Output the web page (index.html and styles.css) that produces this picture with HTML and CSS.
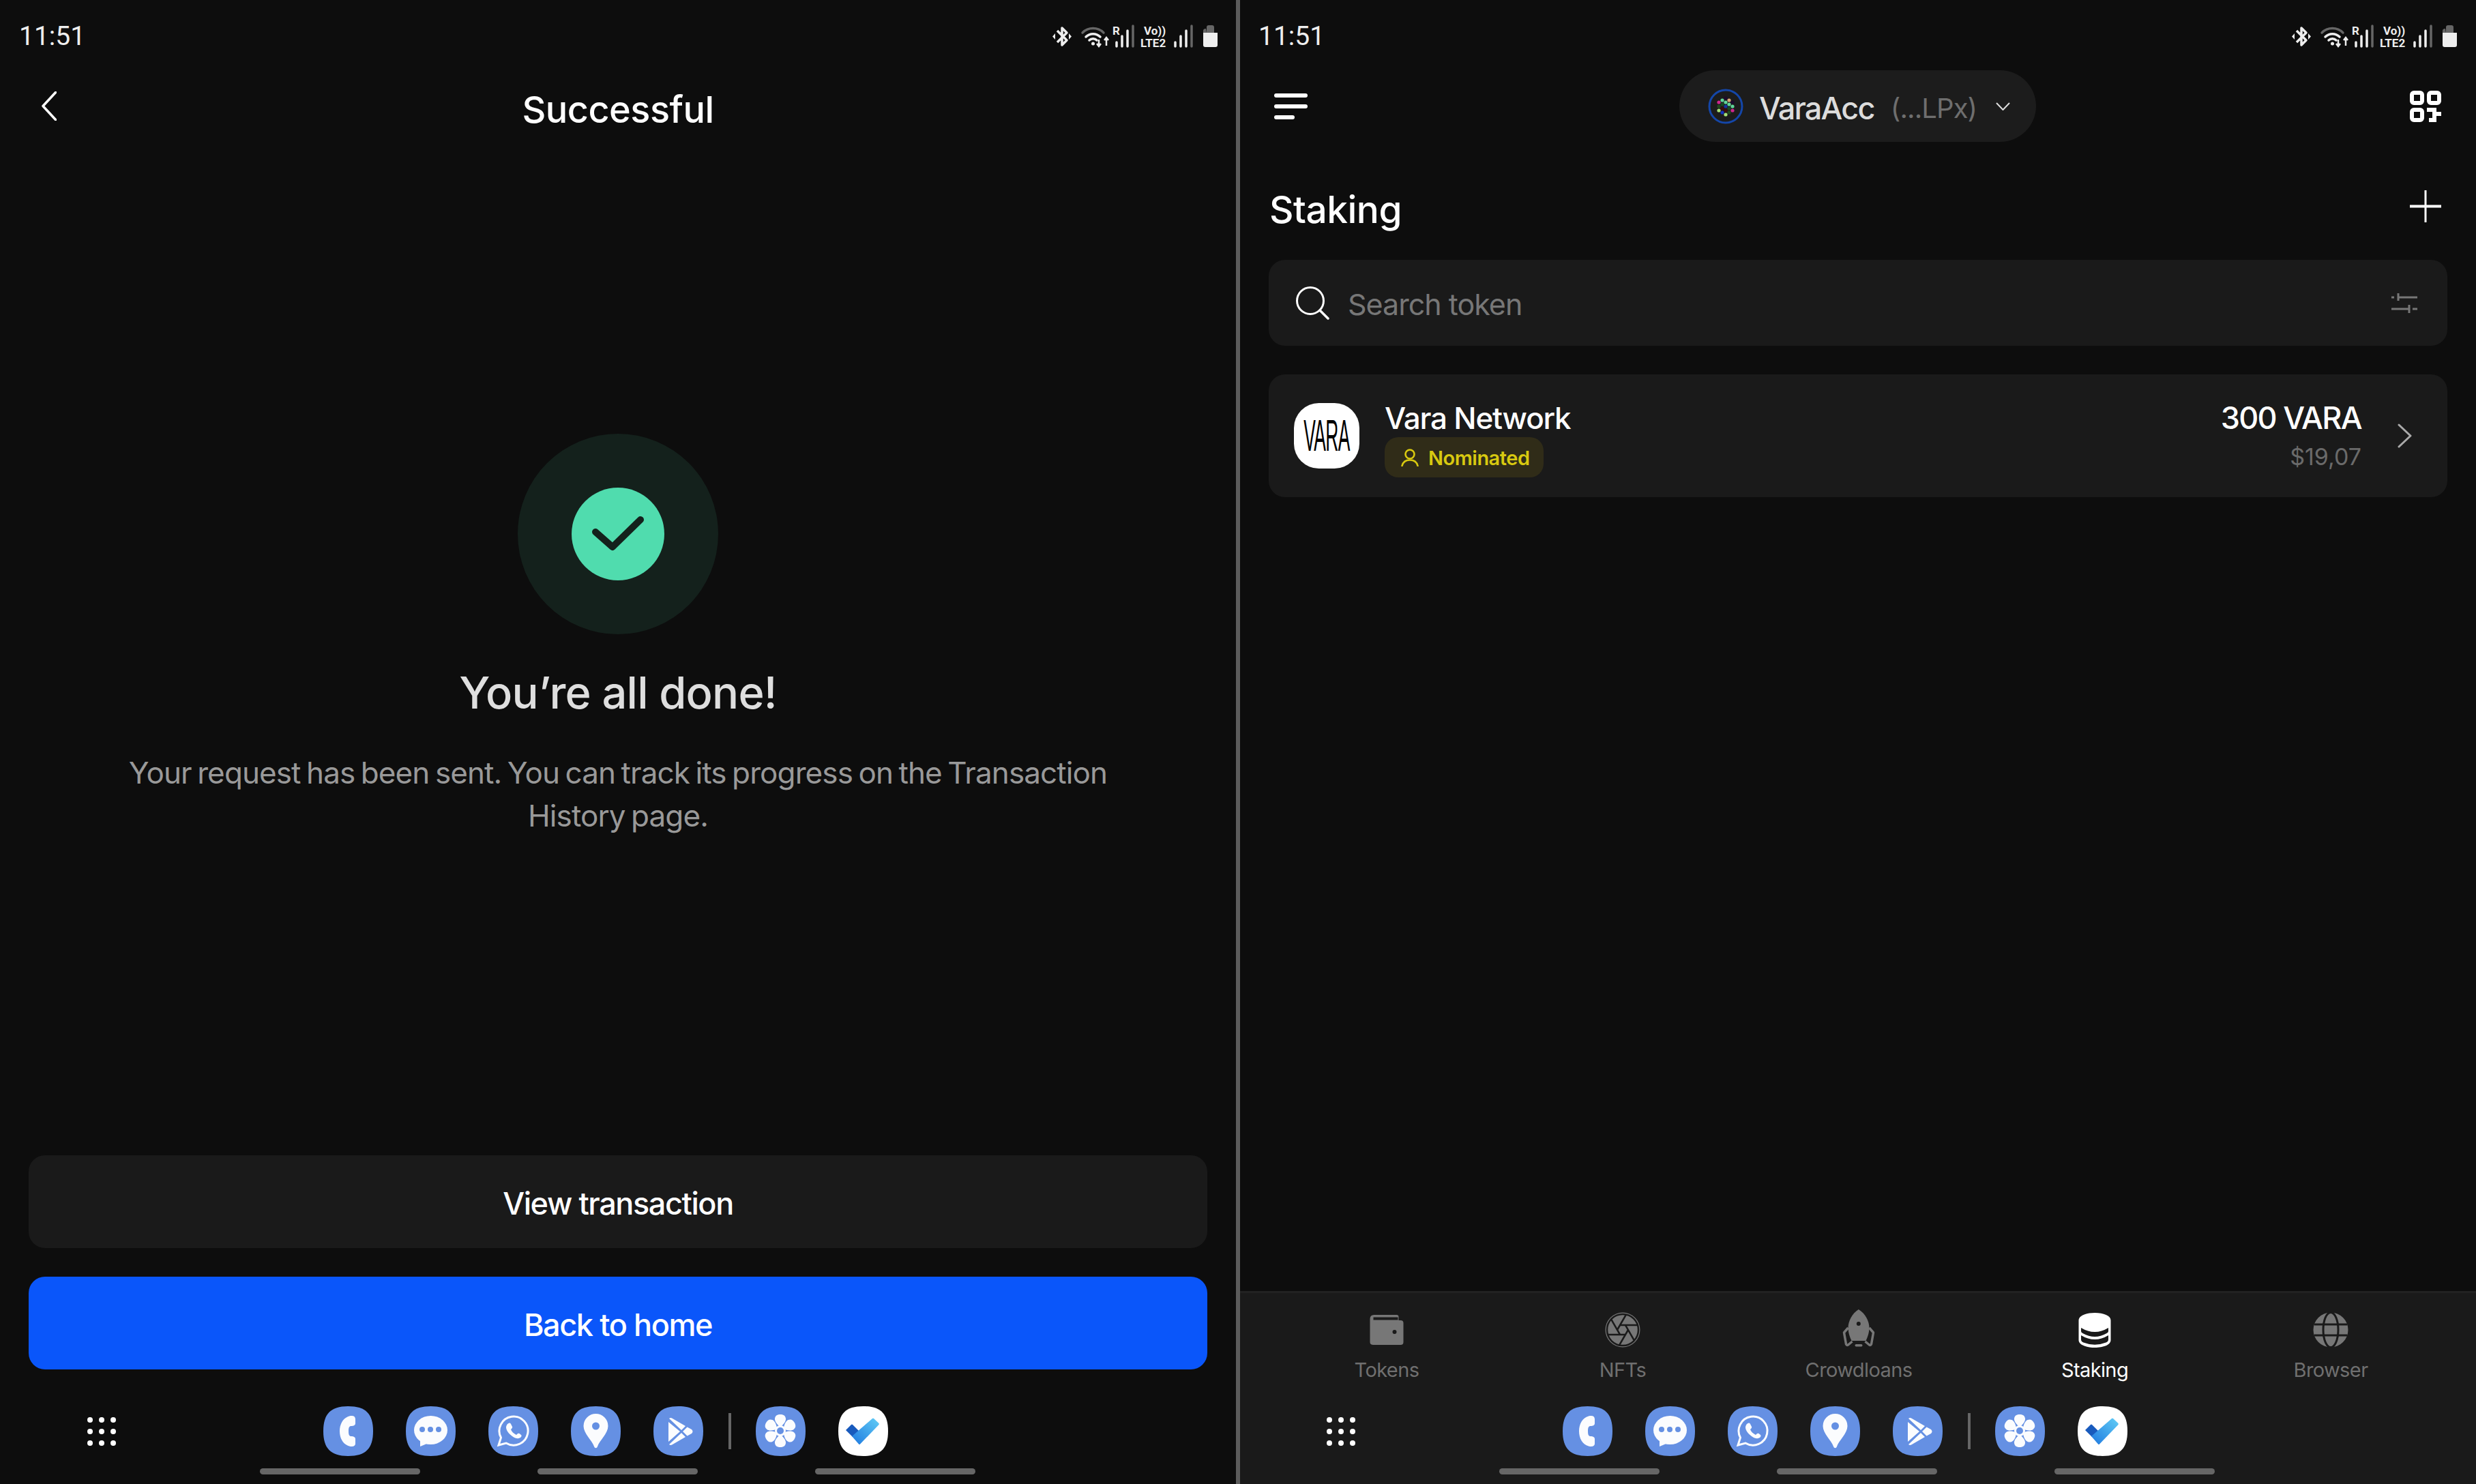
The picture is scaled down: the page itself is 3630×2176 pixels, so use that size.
FILE: index.html
```html
<!DOCTYPE html>
<html lang="en">

<head>
    <meta charset="utf-8">
    <title>Staking</title>
    <link rel="stylesheet" href="styles.css">
</head>

<body>
    <svg class="defs" aria-hidden="true">
        <defs>
            <linearGradient id="todo-grad" x1="1" y1="0" x2="0" y2="1">
                <stop offset="0" stop-color="#62cdf6"/>
                <stop offset="1" stop-color="#1e78df"/>
            </linearGradient>
            <path id="petal" d="M36 30.500C30 26 27.500 21 28 18 28.500 13.500 32 12 36 12S43.500 13.500 44 18C44.500 21 42 26 36 30.500Z"/>
        </defs>
        <symbol id="app-phone" viewBox="0 0 73 73">
            <path fill="#6590e3" d="M36.5 0C62 0 73 11 73 36.5S62 73 36.5 73 0 62 0 36.5 11 0 36.5 0Z"/>
            <path fill="#fbfcfe" d="M38 14.5C44 13 47 15 47 19V25C47 28 44 29 41 29 38 29 37 31 37 36.5 37 42 38 44 41 44 44 44 47 45 47 48V55C47 58 44 60 38 58.5 29 56 24 47 24 36.5 24 26 29 17 38 14.5Z"/>
        </symbol>
        <symbol id="app-message" viewBox="0 0 73 73">
            <path fill="#6590e3" d="M36.5 0C62 0 73 11 73 36.5S62 73 36.5 73 0 62 0 36.5 11 0 36.5 0Z"/>
            <ellipse cx="36.5" cy="35" rx="24.5" ry="21" fill="#fbfcfe"/>
            <path fill="#fbfcfe" d="M21 48L21 59 33 54Z"/>
            <circle cx="24" cy="34" r="4" fill="#6590e3"/>
            <circle cx="36" cy="34" r="4" fill="#6590e3"/>
            <circle cx="48" cy="34" r="4" fill="#6590e3"/>
        </symbol>
        <symbol id="app-whatsapp" viewBox="0 0 73 73">
            <path fill="#6590e3" d="M36.5 0C62 0 73 11 73 36.5S62 73 36.5 73 0 62 0 36.5 11 0 36.5 0Z"/>
            <path fill="none" stroke="#fbfcfe" stroke-width="3" d="M15 57L18.500 46A21 21 0 1 1 26 54Z"/>
            <path fill="#fbfcfe" d="M28 26C30 24 32 24 33 26L35 30C35.500 31 35 32 34 33L33 34C34 37 37 40 41 42L42.500 40.500C43.500 39.500 44.500 39.500 45.500 40L48 42C49 43 48.500 45 47 46 44 48 40 47.500 35 44 30 40.500 26 35 26 31 26 29 27 27 28 26Z"/>
        </symbol>
        <symbol id="app-pin" viewBox="0 0 73 73">
            <path fill="#6590e3" d="M36.5 0C62 0 73 11 73 36.5S62 73 36.5 73 0 62 0 36.5 11 0 36.5 0Z"/>
            <path fill="#fbfcfe" d="M36.5 11A18 18 0 0 1 54.500 29C54.500 40 42 50 39 59 38 62 35 62 34 59 31 50 18.500 40 18.500 29A18 18 0 0 1 36.500 11Z"/>
            <circle cx="36.500" cy="29" r="5.500" fill="#6590e3"/>
        </symbol>
        <symbol id="app-store" viewBox="0 0 73 73">
            <path fill="#6590e3" d="M36.5 0C62 0 73 11 73 36.5S62 73 36.5 73 0 62 0 36.5 11 0 36.5 0Z"/>
            <path fill="#fbfcfe" d="M22 23L39 37 22 52Z"/>
            <path fill="#fbfcfe" d="M23 18Q25 16 28 18L47 29 41 35Z"/>
            <path fill="#fbfcfe" d="M23 56Q25 58 28 56L47 45 41 39Z"/>
            <path fill="#fbfcfe" d="M43 37L49.500 30.500 56 34Q59 37 56 40L49.500 43.500Z"/>
        </symbol>
        <symbol id="app-flower" viewBox="0 0 73 73">
            <path fill="#6590e3" d="M36.5 0C62 0 73 11 73 36.5S62 73 36.5 73 0 62 0 36.5 11 0 36.5 0Z"/>
            <g fill="#fbfcfe">
                <use href="#petal"/>
                <use href="#petal" transform="rotate(60 36 36)"/>
                <use href="#petal" transform="rotate(120 36 36)"/>
                <use href="#petal" transform="rotate(180 36 36)"/>
                <use href="#petal" transform="rotate(240 36 36)"/>
                <use href="#petal" transform="rotate(300 36 36)"/>
                <circle cx="36" cy="36" r="8"/>
            </g>
            <circle cx="36" cy="36" r="5" fill="#6590e3"/>
        </symbol>
        <symbol id="app-todo" viewBox="0 0 73 73">
            <path fill="#fff" d="M36.5 0C62 0 73 11 73 36.5S62 73 36.5 73 0 62 0 36.5 11 0 36.5 0Z"/>
            <path fill="#185abd" d="M11 35L19 27Q20 26 21 27L30 36 21 45Z"/>
            <path fill="url(#todo-grad)" d="M50 18Q51 17 52 18L59.500 25Q60 26 59.500 27L32 55.500Q31 56.500 30 55.500L20 44Z"/>
        </symbol>
    </svg>

    <main class="pane pane-left">
        <div class="status">
            <span class="status-time">11:51</span>
            <svg class="status-icons" viewBox="0 0 242 40">
                <path d="M7 12L21 26 14 33V8L21 15 7 29" fill="none" stroke="#eee" stroke-width="3.500" stroke-linejoin="round"/>
                <path d="M0 20.500L4 16V25ZM28 20.500L24 16V25Z" fill="#eee"/>
                <path d="M44 15A22 22 0 0 1 75 15" fill="none" stroke="#666" stroke-width="3.500" stroke-linecap="round"/>
                <path d="M49 21A15 15 0 0 1 70 21M54 26A8 8 0 0 1 65 26" fill="none" stroke="#eee" stroke-width="3.500" stroke-linecap="round"/>
                <circle cx="59.500" cy="31" r="2.500" fill="#eee"/>
                <path d="M68 25V34M65 31L68 35 71 31M79 34V23M76 26L79 22 82 26" fill="none" stroke="#eee" stroke-width="2.500"/>
                <text class="status-small" x="88" y="18">R</text>
                <path d="M94 29V35M102 20V35M110 12V35" stroke="#eee" stroke-width="3.500" stroke-linecap="round"/>
                <path d="M118 5V35" stroke="#666" stroke-width="3.500" stroke-linecap="round"/>
                <text class="status-small" x="134" y="18">Vo))</text>
                <text class="status-small" x="129" y="36">LTE2</text>
                <path d="M180 29V35M188 20V35M196 12V35" stroke="#eee" stroke-width="3.500" stroke-linecap="round"/>
                <path d="M204 5V35" stroke="#666" stroke-width="3.500" stroke-linecap="round"/>
                <path d="M226 15V7Q226 4 229 4H234Q237 4 237 7V15H221V12Q221 9 225 9Z" fill="#666"/>
                <path d="M221 15H242V33Q242 36 239 36H224Q221 36 221 33Z" fill="#eee"/>
            </svg>
        </div>

        <header class="title-bar">
            <svg class="back-icon" viewBox="0 0 22 43"><path d="M20.500 1.500L2 21.500 20.500 41.500" fill="none" stroke="#fff" stroke-width="3.500" stroke-linecap="round" stroke-linejoin="round"/></svg>
            <h1 class="title-bar-text">Successful</h1>
        </header>

        <section class="done">
            <div class="done-ring">
                <div class="done-dot">
                    <svg class="done-check" viewBox="0 0 76 52"><path d="M5 23L30 45 71 5" fill="none" stroke="#14211c" stroke-width="10" stroke-linecap="round" stroke-linejoin="round"/></svg>
                </div>
            </div>
            <h2 class="done-title">You’re all done!</h2>
            <p class="done-text">Your request has been sent. You can track its progress on the Transaction History page.</p>
        </section>

        <div class="actions">
            <button class="btn btn-dark">View transaction</button>
            <button class="btn btn-blue">Back to home</button>
        </div>

        <footer class="dock">
            <div class="dock-apps">
                <div class="dock-grid">
                    <i></i><i></i><i></i><i></i><i></i><i></i><i></i><i></i><i></i>
                </div>
                <svg class="dock-app"><use href="#app-phone"/></svg>
                <svg class="dock-app"><use href="#app-message"/></svg>
                <svg class="dock-app"><use href="#app-whatsapp"/></svg>
                <svg class="dock-app"><use href="#app-pin"/></svg>
                <svg class="dock-app"><use href="#app-store"/></svg>
                <span class="dock-sep"></span>
                <svg class="dock-app"><use href="#app-flower"/></svg>
                <svg class="dock-app"><use href="#app-todo"/></svg>
            </div>
            <div class="dock-bars"><i></i><i></i><i></i></div>
        </footer>
    </main>

    <div class="divider"></div>

    <main class="pane pane-right">
        <div class="status">
            <span class="status-time">11:51</span>
            <svg class="status-icons" viewBox="0 0 242 40">
                <path d="M7 12L21 26 14 33V8L21 15 7 29" fill="none" stroke="#eee" stroke-width="3.500" stroke-linejoin="round"/>
                <path d="M0 20.500L4 16V25ZM28 20.500L24 16V25Z" fill="#eee"/>
                <path d="M44 15A22 22 0 0 1 75 15" fill="none" stroke="#666" stroke-width="3.500" stroke-linecap="round"/>
                <path d="M49 21A15 15 0 0 1 70 21M54 26A8 8 0 0 1 65 26" fill="none" stroke="#eee" stroke-width="3.500" stroke-linecap="round"/>
                <circle cx="59.500" cy="31" r="2.500" fill="#eee"/>
                <path d="M68 25V34M65 31L68 35 71 31M79 34V23M76 26L79 22 82 26" fill="none" stroke="#eee" stroke-width="2.500"/>
                <text class="status-small" x="88" y="18">R</text>
                <path d="M94 29V35M102 20V35M110 12V35" stroke="#eee" stroke-width="3.500" stroke-linecap="round"/>
                <path d="M118 5V35" stroke="#666" stroke-width="3.500" stroke-linecap="round"/>
                <text class="status-small" x="134" y="18">Vo))</text>
                <text class="status-small" x="129" y="36">LTE2</text>
                <path d="M180 29V35M188 20V35M196 12V35" stroke="#eee" stroke-width="3.500" stroke-linecap="round"/>
                <path d="M204 5V35" stroke="#666" stroke-width="3.500" stroke-linecap="round"/>
                <path d="M226 15V7Q226 4 229 4H234Q237 4 237 7V15H221V12Q221 9 225 9Z" fill="#666"/>
                <path d="M221 15H242V33Q242 36 239 36H224Q221 36 221 33Z" fill="#eee"/>
            </svg>
        </div>

        <header class="top-bar">
            <div class="menu-icon"><i></i><i></i><i></i></div>
            <div class="account">
                <svg class="account-avatar" viewBox="0 0 52 52">
                    <circle cx="26" cy="26" r="24" fill="#1c1c1c" stroke="#1446a8" stroke-width="3"/>
                    <circle cx="26" cy="14" r="2.600" fill="#1d0a2e"/>
                    <circle cx="21" cy="17" r="2.600" fill="#62d69a"/>
                    <circle cx="31" cy="17" r="2.600" fill="#d9a57a"/>
                    <circle cx="16" cy="20" r="2.600" fill="#d0268f"/>
                    <circle cx="26" cy="20" r="2.600" fill="#62d69a"/>
                    <circle cx="36" cy="20" r="2.600" fill="#1d0a2e"/>
                    <circle cx="21" cy="23" r="2.600" fill="#154a22"/>
                    <circle cx="31" cy="23" r="2.600" fill="#62d69a"/>
                    <circle cx="16" cy="26" r="2.600" fill="#1f4a1c"/>
                    <circle cx="26" cy="26" r="2.600" fill="#14349e"/>
                    <circle cx="36" cy="26" r="2.600" fill="#62d69a"/>
                    <circle cx="21" cy="29" r="2.600" fill="#3d0a0a"/>
                    <circle cx="31" cy="29" r="2.600" fill="#154a22"/>
                    <circle cx="16" cy="32" r="2.600" fill="#a5e07a"/>
                    <circle cx="26" cy="32" r="2.600" fill="#3d0a0a"/>
                    <circle cx="36" cy="32" r="2.600" fill="#d0268f"/>
                    <circle cx="21" cy="35" r="2.600" fill="#1434c0"/>
                    <circle cx="31" cy="35" r="2.600" fill="#1f4a1c"/>
                    <circle cx="26" cy="38" r="2.600" fill="#a5e07a"/>
                </svg>
                <span class="account-name">VaraAcc</span>
                <span class="account-addr">(...LPx)</span>
                <svg class="account-caret" viewBox="0 0 21 12"><path d="M1 1L10.500 11 20 1" fill="none" stroke="#ddd" stroke-width="2"/></svg>
            </div>
            <svg class="qr-icon" viewBox="0 0 46 46">
                <g fill="none" stroke="#fff" stroke-width="6">
                    <rect x="3" y="3" width="15" height="15" rx="3"/>
                    <rect x="28" y="3" width="15" height="15" rx="3"/>
                    <rect x="3" y="28" width="15" height="15" rx="3"/>
                    <path d="M25 28H36V43H28M36 34H46"/>
                </g>
            </svg>
        </header>

        <div class="section-head">
            <h2 class="section-title">Staking</h2>
            <svg class="plus-icon" viewBox="0 0 46 47"><path d="M23 0V47" stroke="#fff" stroke-width="3"/><path d="M0 23.500H46" stroke="#fff" stroke-width="4"/></svg>
        </div>

        <div class="search">
            <svg class="search-icon" viewBox="0 0 50 50"><circle cx="22" cy="22" r="19.500" fill="none" stroke="#fff" stroke-width="3"/><path d="M36 36L48 48" stroke="#fff" stroke-width="3.500" stroke-linecap="round"/></svg>
            <span class="search-text">Search token</span>
            <svg class="filter-icon" viewBox="0 0 38 29">
                <path d="M0 6H4M10 0V11M10 6H38M0 23H26M26 17V29M31 23H38" fill="none" stroke="#777" stroke-width="3"/>
            </svg>
        </div>

        <div class="card">
            <div class="card-logo"><span class="card-logo-text">VARA</span></div>
            <div class="card-info">
                <div class="card-name">Vara Network</div>
                <div class="badge">
                    <svg class="badge-icon" viewBox="0 0 26 26"><circle cx="13" cy="8" r="6.500" fill="none" stroke="#d8c910" stroke-width="2.600"/><path d="M1.500 25C3 19 8 16.500 13 16.500S23 19 24.500 25" fill="none" stroke="#d8c910" stroke-width="2.600" stroke-linecap="round"/></svg>
                    <span class="badge-text">Nominated</span>
                </div>
            </div>
            <div class="card-value">
                <div class="card-amount">300 VARA</div>
                <div class="card-fiat">$19,07</div>
            </div>
            <svg class="card-arrow" viewBox="0 0 21 36"><path d="M2 2L19 18 2 34" fill="none" stroke="#aaa" stroke-width="3" stroke-linecap="round" stroke-linejoin="round"/></svg>
        </div>

        <div class="bottom">
            <nav class="tabs">
                <div class="tab">
                    <svg class="tab-icon" viewBox="0 0 56 56">
                        <g transform="translate(3.500 8)">
                            <path fill="#777" d="M6 0H39Q42 0 42 3V8H45Q49 8 49 12V40Q49 44 45 44H5Q0 44 0 40V6Q0 0 6 0Z"/>
                            <path d="M5 5.500H41" stroke="#1a1a1a" stroke-width="4"/>
                            <circle cx="36" cy="25" r="3" fill="#1a1a1a"/>
                        </g>
                    </svg>
                    <span class="tab-label">Tokens</span>
                </div>
                <div class="tab">
                    <svg class="tab-icon" viewBox="0 0 56 56">
                        <circle cx="28" cy="30" r="25.500" fill="#777"/>
                        <g transform="translate(28 30)" stroke="#1a1a1a" stroke-width="2.500">
                            <circle r="23" fill="none"/>
                            <path d="M8 0L-4.970 22.460"/>
                            <path d="M8 0L-4.970 22.460" transform="rotate(60)"/>
                            <path d="M8 0L-4.970 22.460" transform="rotate(120)"/>
                            <path d="M8 0L-4.970 22.460" transform="rotate(180)"/>
                            <path d="M8 0L-4.970 22.460" transform="rotate(240)"/>
                            <path d="M8 0L-4.970 22.460" transform="rotate(300)"/>
                        </g>
                    </svg>
                    <span class="tab-label">NFTs</span>
                </div>
                <div class="tab">
                    <svg class="tab-icon" viewBox="0 0 56 56">
                        <g transform="translate(4.500 0)">
                            <path fill="#777" d="M23.300 0C33 6 39 17 39 27 39 33 37 40 34 46H13C10 40 8 33 8 27 8 17 14 6 23.300 0Z"/>
                            <circle cx="23.300" cy="21" r="3" fill="#1a1a1a"/>
                            <path d="M8 27L2 34 5 51Q6 53 8 52L14 47M39 27L45 34 42 51Q41 53 39 52L33 47" fill="none" stroke="#777" stroke-width="3.500" stroke-linejoin="round"/>
                            <rect x="18" y="51" width="11" height="3.500" rx="1.700" fill="#777"/>
                        </g>
                    </svg>
                    <span class="tab-label">Crowdloans</span>
                </div>
                <div class="tab tab-active">
                    <svg class="tab-icon" viewBox="0 0 56 56">
                        <g transform="translate(4.500 5)">
                            <path fill="#fff" d="M0 11C0 4 11 0 23.700 0S47 4 47 11V40C47 47 36 51 23.700 51S0 47 0 40Z"/>
                            <path fill="#1a1a1a" d="M3.500 22Q23.700 34 43.500 22V27Q43.500 29 41 30 23.700 40 6 30 3.500 29 3.500 27Z"/>
                            <path fill="#1a1a1a" d="M3.500 33Q23.700 45 43.500 33V39Q43.500 42 40 43.500 23.700 50 7 43.500 3.500 42 3.500 39Z"/>
                        </g>
                    </svg>
                    <span class="tab-label">Staking</span>
                </div>
                <div class="tab">
                    <svg class="tab-icon" viewBox="0 0 56 56">
                        <circle cx="28" cy="30" r="25.500" fill="#777"/>
                        <g fill="none" stroke="#1a1a1a" stroke-width="3">
                            <ellipse cx="28" cy="30" rx="11" ry="25.500"/>
                            <path d="M4 22H52M4 38H52"/>
                        </g>
                    </svg>
                    <span class="tab-label">Browser</span>
                </div>
            </nav>

            <footer class="dock">
                <div class="dock-apps">
                    <div class="dock-grid">
                        <i></i><i></i><i></i><i></i><i></i><i></i><i></i><i></i><i></i>
                    </div>
                    <svg class="dock-app"><use href="#app-phone"/></svg>
                    <svg class="dock-app"><use href="#app-message"/></svg>
                    <svg class="dock-app"><use href="#app-whatsapp"/></svg>
                    <svg class="dock-app"><use href="#app-pin"/></svg>
                    <svg class="dock-app"><use href="#app-store"/></svg>
                    <span class="dock-sep"></span>
                    <svg class="dock-app"><use href="#app-flower"/></svg>
                    <svg class="dock-app"><use href="#app-todo"/></svg>
                </div>
                <div class="dock-bars"><i></i><i></i><i></i></div>
            </footer>
        </div>
    </main>
</body>

</html>
```

FILE: styles.css
```css
html {
    box-sizing: border-box;
    height: 100%;
}

*,
*:before,
*:after {
    box-sizing: inherit;
}

body {
    background: #0d0d0d;
    color: #fff;
    display: flex;
    font-family: Inter, "Noto Sans", sans-serif;
    height: 2176px;
    margin: 0;
    overflow: hidden;
    width: 3630px;
}

h1,
h2,
p {
    margin: 0;
}

.defs {
    height: 0;
    width: 0;
}

.pane {
    display: flex;
    flex-direction: column;
    height: 2176px;
    width: 1812px;
}

.divider {
    background: #5c5c5c;
    flex: none;
    width: 6px;
}

/* status bar */
.status {
    align-items: center;
    display: flex;
    height: 103px;
    justify-content: space-between;
    padding: 3px 27px 0 28px;
}

.pane-right .status {
    padding: 3px 28px 0 27px;
}

.status-time {
    color: #eee;
    font-family: Roboto, sans-serif;
    font-size: 39px;
}

.status-icons {
    height: 40px;
    width: 242px;
}

.status-small {
    fill: #eee;
    font-family: Roboto, sans-serif;
    font-size: 17px;
    font-weight: 700;
}

/* left pane */
.title-bar {
    align-items: center;
    display: grid;
    grid-template-columns: 1fr auto 1fr;
    height: 114px;
}

.back-icon {
    height: 43px;
    margin: -10px 0 0 61px;
    width: 22px;
}

.title-bar-text {
    font-size: 54px;
    font-weight: 500;
    letter-spacing: -0.5px;
}

.done {
    align-items: center;
    display: flex;
    flex-direction: column;
    margin-top: 419px;
}

.done-ring {
    align-items: center;
    background: #14211c;
    border-radius: 50%;
    display: flex;
    height: 294px;
    justify-content: center;
    width: 294px;
}

.done-dot {
    align-items: center;
    background: #50dcae;
    border-radius: 50%;
    display: flex;
    height: 136px;
    justify-content: center;
    width: 136px;
}

.done-check {
    height: 52px;
    width: 76px;
}

.done-title {
    color: #dedede;
    font-size: 65px;
    font-weight: 500;
    letter-spacing: -0.8px;
    line-height: 80px;
    margin-top: 46px;
}

.done-text {
    color: #999;
    font-size: 44px;
    letter-spacing: -0.9px;
    line-height: 63px;
    margin-top: 46px;
    max-width: 1500px;
    text-align: center;
    word-spacing: -3px;
}

.actions {
    display: flex;
    flex-direction: column;
    gap: 42px;
    margin-bottom: 22px;
    margin-top: auto;
    padding: 0 42px;
}

.btn {
    border: 0;
    border-radius: 24px;
    color: #fff;
    font-family: inherit;
    font-size: 45px;
    font-weight: 500;
    height: 136px;
    letter-spacing: -1.4px;
    padding-top: 5px;
}

.btn-dark {
    background: #1a1a1a;
}

.btn-blue {
    background: #0a56fa;
}

/* dock */
.dock {
    display: flex;
    flex-direction: column;
    height: 146px;
    padding-top: 32px;
}

.pane-right .dock {
    margin-left: -1px;
}

.dock-apps {
    align-items: center;
    display: flex;
    gap: 48px;
    height: 73px;
}

.dock-grid {
    display: grid;
    gap: 9px;
    grid-template-columns: repeat(3, 8px);
    margin: 0 256px 0 128px;
}

.dock-grid i {
    background: #fff;
    border-radius: 50%;
    height: 8px;
}

.dock-app {
    flex: none;
    height: 73px;
    width: 73px;
}

.dock-sep {
    background: #666;
    flex: none;
    height: 53px;
    margin: 0 -12px 0 -11px;
    width: 4px;
}

.dock-bars {
    display: flex;
    gap: 172px;
    margin-top: 18px;
    padding-left: 381px;
}

.dock-bars i {
    background: #666;
    border-radius: 5px;
    height: 9px;
    width: 235px;
}

/* right pane */
.top-bar {
    align-items: center;
    display: grid;
    grid-template-columns: 1fr auto 1fr;
    height: 105px;
    padding: 0 51px 0 50px;
}

.menu-icon {
    display: flex;
    flex-direction: column;
    gap: 10px;
    width: 49px;
}

.menu-icon i {
    background: #fff;
    border-radius: 3px;
    height: 6px;
}

.menu-icon i:last-child {
    width: 30px;
}

.account {
    align-items: center;
    background: #1c1c1c;
    border-radius: 53px;
    display: flex;
    height: 105px;
    padding-left: 42px;
    width: 523px;
}

.account-avatar {
    flex: none;
    height: 52px;
    width: 52px;
}

.account-name {
    color: #dcdcdc;
    font-size: 45px;
    font-weight: 500;
    letter-spacing: -1.8px;
    margin-left: 23px;
    padding-top: 6px;
}

.account-addr {
    color: #6e6e6e;
    font-size: 40px;
    letter-spacing: -0.9px;
    margin-left: 24px;
    padding-top: 6px;
}

.account-caret {
    height: 12px;
    margin-left: 28px;
    width: 21px;
}

.qr-icon {
    height: 46px;
    justify-self: end;
    width: 46px;
}

.section-head {
    align-items: flex-start;
    display: flex;
    height: 56px;
    justify-content: space-between;
    margin-top: 71px;
    padding: 0 51px 0 43px;
}

.section-title {
    font-size: 55px;
    font-weight: 500;
    letter-spacing: -0.5px;
    line-height: 56px;
}

.plus-icon {
    height: 47px;
    width: 46px;
}

.search {
    align-items: center;
    background: #1a1a1a;
    border-radius: 24px;
    display: flex;
    height: 126px;
    margin: 46px 42px 0;
    padding: 0 44px 0 39px;
}

.search-icon {
    height: 50px;
    width: 50px;
}

.search-text {
    color: #777;
    font-size: 43px;
    letter-spacing: -1px;
    margin-left: 27px;
    padding-top: 3px;
}

.filter-icon {
    height: 29px;
    margin-left: auto;
    width: 38px;
}

.card {
    align-items: center;
    background: #1a1a1a;
    border-radius: 24px;
    display: flex;
    height: 180px;
    margin: 42px 42px 0;
    padding: 0 52px 0 37px;
}

.card-logo {
    align-items: center;
    background: #fff;
    border-radius: 38%;
    color: #000;
    display: flex;
    flex: none;
    height: 96px;
    justify-content: center;
    overflow: hidden;
    width: 96px;
}

.card-logo-text {
    font-family: "Liberation Sans", sans-serif;
    font-size: 40px;
    letter-spacing: -1px;
    transform: scale(0.66, 1.6);
}

.card-info {
    margin: 10px 0 0 37px;
}

.card-name {
    font-size: 44px;
    font-weight: 500;
    letter-spacing: -1.2px;
    line-height: 50px;
}

.badge {
    align-items: center;
    background: #302c18;
    border-radius: 20px;
    display: flex;
    height: 59px;
    margin-top: 3px;
    padding: 2px 21px 0 24px;
    width: fit-content;
}

.badge-icon {
    height: 26px;
    margin-top: -2px;
    width: 26px;
}

.badge-text {
    color: #d8c910;
    font-size: 29px;
    font-weight: 600;
    letter-spacing: -0.5px;
    margin-left: 14px;
}

.card-value {
    margin-left: auto;
    text-align: right;
}

.card-amount {
    font-size: 45px;
    font-weight: 500;
    letter-spacing: -1.7px;
    line-height: 50px;
}

.card-fiat {
    color: #6a6a6a;
    font-size: 34px;
    line-height: 40px;
    margin-top: 12px;
}

.card-arrow {
    height: 36px;
    margin-left: 53px;
    width: 21px;
}

.bottom {
    background: #1a1a1a;
    border-top: 3px solid #222;
    margin-top: auto;
}

.tabs {
    display: grid;
    grid-template-columns: repeat(5, 346px);
    height: 134px;
    padding: 24px 0 0 42px;
}

.tab {
    align-items: center;
    color: #6f6f6f;
    display: flex;
    flex-direction: column;
}

.tab-active {
    color: #fff;
}

.tab-icon {
    height: 56px;
    width: 56px;
}

.tab-label {
    font-size: 29px;
    letter-spacing: -0.6px;
    line-height: 36px;
    margin-top: 15px;
}
```
